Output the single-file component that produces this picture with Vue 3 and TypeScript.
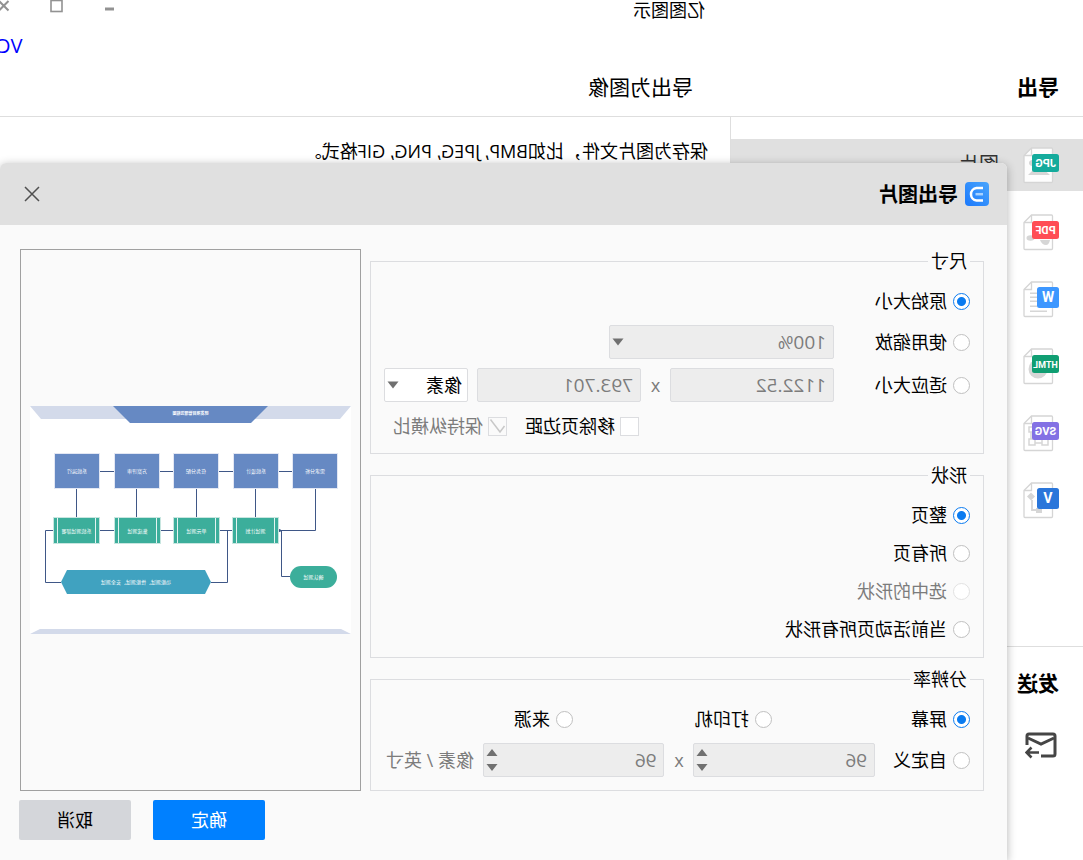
<script setup lang="ts">
import { ref } from 'vue'

interface FormatItem {
  id: string
  color: string
  wide: boolean
  size: number
}

interface FlowNode {
  x: number
  label: string
}

const formats: FormatItem[] = [
  { id: 'JPG', color: '#14ab9c', wide: true, size: 11 },
  { id: 'PDF', color: '#ff4d55', wide: true, size: 11 },
  { id: 'W', color: '#3d97ff', wide: false, size: 14 },
  { id: 'HTML', color: '#109e72', wide: true, size: 9 },
  { id: 'SVG', color: '#8371e4', wide: true, size: 11 },
  { id: 'V', color: '#2a76da', wide: false, size: 14 },
]

const shapes = [
  { value: 'page', label: '整页', disabled: false },
  { value: 'all', label: '所有页', disabled: false },
  { value: 'selected', label: '选中的形状', disabled: true },
  { value: 'active', label: '当前活动页所有形状', disabled: false },
]

const sources = [
  { value: 'screen', label: '屏幕' },
  { value: 'printer', label: '打印机' },
  { value: 'source', label: '来源' },
]

const stages: FlowNode[] = [
  { x: 14, label: '需求分析' },
  { x: 73, label: '系统设计' },
  { x: 133, label: '任务分配' },
  { x: 192, label: '方案评审' },
  { x: 252, label: '系统运行' },
]

const tests: FlowNode[] = [
  { x: 73, label: '测试计划' },
  { x: 132, label: '单元测试' },
  { x: 191, label: '集成测试' },
  { x: 252, label: '系统测试部署' },
]

const sizeMode = ref('original')
const shapeMode = ref('page')
const dpiMode = ref('screen')
const trimMargin = ref(false)
const keepRatio = ref(true)
</script>

<template>
  <div class="window">
    <header class="titlebar">
      <span class="app-name">亿图图示</span>
      <div class="controls">
        <button type="button" aria-label="最小化">
          <svg width="13" height="13" viewBox="0 0 13 13"><path d="M2 9H11" stroke="#929292" stroke-width="3" /></svg>
        </button>
        <button type="button" aria-label="最大化">
          <svg width="13" height="13" viewBox="0 0 13 13"><rect x="1" y="0.5" width="11" height="11" fill="none" stroke="#929292" stroke-width="1.6" /></svg>
        </button>
        <button type="button" aria-label="关闭窗口">
          <svg width="13" height="13" viewBox="0 0 13 13"><path d="M1.5 1L11 10.500M11 1L1.500 10.500" stroke="#929292" stroke-width="2" /></svg>
        </button>
      </div>
    </header>
    <div class="account"><a href="#">VC</a></div>
    <div class="headings">
      <h1>导出</h1>
      <h2>导出为图像</h2>
    </div>

    <div class="main">
      <nav class="sidebar">
        <ul>
          <li v-for="(item, i) in formats" :key="item.id" :class="{ active: i === 0 }">
            <svg class="format" width="36" height="37" viewBox="0 0 36 37">
              <path d="M7.500 1H27.500L35 8.500V34.500Q35 35.500 34 35.500H7.500Q6.500 35.500 6.500 34.500V2Q6.500 1 7.500 1Z" :fill="i === 0 ? '#fdfdfd' : '#fff'" stroke="#d5d5d5" stroke-width="1.300" />
              <path d="M27.500 1V8.500H35" fill="none" stroke="#d5d5d5" stroke-width="1.300" />
              <g fill="#d6d6d6">
                <path v-if="item.id === 'JPG'" d="M9 28L18 20L25 22L31 28ZM27 13a3 3 0 1 0 .1 0Z" />
                <g v-else-if="item.id === 'PDF'">
                  <ellipse cx="28.500" cy="24" rx="4" ry="2.700" />
                  <path d="M9 26H19Q17 31 13 31Q10 31 9 26Z" />
                </g>
                <g v-else-if="item.id === 'W'">
                  <path d="M22 11.500h7v1.500h-7zM22 15.500h7v1.500h-7zM22 19.500h7v1.500h-7zM22 24.500h7v1.500h-7zM12 29.500h17v1.500h-17z" />
                </g>
                <circle v-else-if="item.id === 'HTML'" cx="21" cy="21" r="9.500" />
                <path v-else-if="item.id === 'SVG'" d="M11 24h6v6h-6zM24 24h6v6h-6zM24 12h6v5h-6z" fill="none" stroke="#d6d6d6" stroke-width="1.500" />
                <g v-else>
                  <path d="M28 10.500L32 14.500L28 18.500L24 14.500Z" />
                  <path d="M27 18V28H21" fill="none" stroke="#d6d6d6" stroke-width="1.800" />
                  <path d="M17 26h6v5h-6z" />
                </g>
              </g>
              <path v-if="item.id === 'SVG'" d="M17 28H24M28 17V24" stroke="#d6d6d6" stroke-width="1.500" />
              <rect x="0" :y="item.wide ? 7 : 6" :width="item.wide ? 27 : 22" :height="item.wide ? 18 : 21" rx="2.500" :fill="item.color" />
              <text :x="item.wide ? 13.500 : 11" :y="item.id === 'HTML' ? 19.500 : item.wide ? 20 : 21" class="badge" :font-size="item.size">{{ item.id }}</text>
            </svg>
            <span v-if="i === 0">图片</span>
          </li>
        </ul>
        <section class="send">
          <h3>发送</h3>
          <svg width="32" height="27" viewBox="0 0 32 27" fill="none" stroke="#454545" stroke-width="3">
            <path d="M16 24H4Q2 24 2 22V4Q2 2 4 2H28Q30 2 30 4V13" />
            <path d="M3 6L16 12L29 6" />
            <path d="M18 20.500H30M25.500 15.500L30.500 20.500L25.500 25.500" stroke-width="2.600" />
          </svg>
        </section>
      </nav>
      <p class="hint">保存为图片文件，比如BMP, JPEG, PNG, GIF格式。</p>
    </div>

    <section class="dialog" role="dialog" aria-labelledby="dialog-title">
      <header class="dialog-head">
        <svg width="24" height="24" viewBox="0 0 24 24">
          <defs>
            <linearGradient id="logo" x1="0" y1="0" x2="1" y2="1">
              <stop offset="0" stop-color="#4aa5fc" />
              <stop offset="1" stop-color="#1b79fc" />
            </linearGradient>
          </defs>
          <rect width="24" height="24" rx="4" fill="url(#logo)" />
          <path d="M6 6H12.500A6.300 6.300 0 0 1 12.500 18.500H6" fill="none" stroke="#fff" stroke-width="2.500" />
          <path d="M6 12.200H13.500" stroke="#a9d2fe" stroke-width="2.500" />
        </svg>
        <h2 id="dialog-title">导出图片</h2>
        <button type="button" class="close" aria-label="关闭">
          <svg width="16" height="16" viewBox="0 0 16 16"><path d="M1 1L15 15M15 1L1 15" stroke="#505050" stroke-width="1.500" /></svg>
        </button>
      </header>

      <form class="dialog-body" @submit.prevent>
        <div class="options">
          <fieldset class="size">
            <legend>尺寸</legend>
            <div class="row">
              <label class="choice"><input v-model="sizeMode" type="radio" name="size" value="original" />原始大小</label>
            </div>
            <div class="row">
              <label class="choice lead"><input v-model="sizeMode" type="radio" name="size" value="scale" />使用缩放</label>
              <div class="fields">
                <div class="select half">
                  <select aria-label="缩放比例" disabled><option>100%</option></select>
                  <svg width="12" height="8" viewBox="0 0 12 8"><path d="M0.500 0.500H11.500L6 7.500Z" fill="#707070" /></svg>
                </div>
              </div>
            </div>
            <div class="row">
              <label class="choice lead"><input v-model="sizeMode" type="radio" name="size" value="fit" />适应大小</label>
              <div class="fields">
                <input class="box" type="text" aria-label="宽度" value="1122.52" disabled />
                <span class="times">x</span>
                <input class="box" type="text" aria-label="高度" value="793.701" disabled />
                <div class="select unit">
                  <select aria-label="单位"><option>像素</option></select>
                  <svg width="12" height="8" viewBox="0 0 12 8"><path d="M0.500 0.500H11.500L6 7.500Z" fill="#707070" /></svg>
                </div>
              </div>
            </div>
            <div class="row checks">
              <label class="choice">
                <span class="tick"><input v-model="trimMargin" type="checkbox" /></span>移除页边距
              </label>
              <label class="choice off">
                <span class="tick">
                  <input v-model="keepRatio" type="checkbox" disabled />
                  <svg v-if="keepRatio" width="19" height="19" viewBox="0 0 19 19"><path d="M16.500 2.500L7 15L2.500 9" fill="none" stroke="#c8c8c8" stroke-width="1.500" /></svg>
                </span>保持纵横比
              </label>
            </div>
          </fieldset>

          <fieldset class="shape">
            <legend>形状</legend>
            <div v-for="s in shapes" :key="s.value" class="row">
              <label class="choice" :class="{ off: s.disabled }">
                <input v-model="shapeMode" type="radio" name="shape" :value="s.value" :disabled="s.disabled" />{{ s.label }}
              </label>
            </div>
          </fieldset>

          <fieldset class="dpi">
            <legend>分辨率</legend>
            <div class="row sources">
              <label v-for="s in sources" :key="s.value" class="choice">
                <input v-model="dpiMode" type="radio" name="dpi" :value="s.value" />{{ s.label }}
              </label>
            </div>
            <div class="row">
              <label class="choice lead"><input v-model="dpiMode" type="radio" name="dpi" value="custom" />自定义</label>
              <div class="fields">
                <div class="spin">
                  <input class="box" type="text" aria-label="水平分辨率" value="96" disabled />
                  <svg width="12" height="24" viewBox="0 0 12 24"><path d="M0.500 8L6 1L11.500 8ZM0.500 16H11.500L6 23Z" fill="#707070" /></svg>
                </div>
                <span class="times">x</span>
                <div class="spin">
                  <input class="box" type="text" aria-label="垂直分辨率" value="96" disabled />
                  <svg width="12" height="24" viewBox="0 0 12 24"><path d="M0.500 8L6 1L11.500 8ZM0.500 16H11.500L6 23Z" fill="#707070" /></svg>
                </div>
                <span class="per">像素 / 英寸</span>
              </div>
            </div>
          </fieldset>
        </div>

        <div class="preview">
          <svg viewBox="0 0 321 228">
            <rect width="321" height="228" fill="#fff" />
            <path d="M0 0H321L310 13H11Z" fill="#d3daea" />
            <path d="M83 0H238L221 17H100Z" fill="#6689c3" />
            <text x="160.500" y="9" class="node" font-size="4" font-weight="700">研发项目管理流程图</text>
            <g fill="none" stroke="#3f5787" stroke-width="1">
              <path d="M58 65.500H252M35.500 82V124.500H73M95.500 82V112M154.500 82V112M214.500 82V112M274.500 82V112" />
              <path d="M118 124.500H305.500V176.500H290M123.500 124.500V176.500H140M69.500 124.500V170.500H61" />
            </g>
            <circle cx="71.500" cy="124.500" r="1.500" fill="#3f5787" />
            <g v-for="n in stages" :key="'s' + n.x">
              <rect :x="n.x - 0.500" y="47.500" width="45" height="35" fill="#6689c3" stroke="#e3e7f3" />
              <text :x="n.x + 22" y="67" class="node" font-size="5">{{ n.label }}</text>
            </g>
            <g v-for="n in tests" :key="'t' + n.x">
              <rect :x="n.x - 0.500" y="111.500" width="46" height="26" fill="#3cae9b" stroke="#c8e6e0" />
              <path :d="`M${n.x + 3.5} 112V137M${n.x + 41.5} 112V137`" stroke="#e4f4f1" />
              <text :x="n.x + 22.500" y="126.500" class="node" font-size="5">{{ n.label }}</text>
            </g>
            <rect x="14" y="160" width="47" height="22" rx="11" fill="#3cae9b" />
            <text x="37.500" y="173" class="node" font-size="5">确认测试</text>
            <path d="M146 164H284L290 176L284 188H146L140 176Z" fill="#40a2c0" />
            <text x="215" y="178" class="node" font-size="5">功能测试、性能测试、安全测试</text>
            <path d="M10 223H311L321 228H0Z" fill="#d3daea" />
          </svg>
        </div>

        <div class="actions">
          <button type="submit" class="primary">确定</button>
          <button type="button">取消</button>
        </div>
      </form>
    </section>
  </div>
</template>

<style>
body {
  background: #fff;
}
</style>

<style scoped>
.window {
  position: relative;
  display: flex;
  flex-direction: column;
  box-sizing: border-box;
  min-height: 100vh;
  overflow: hidden;
  background: #fff;
  color: #000;
  font: 400 18px/24px "Open Sans", "Noto Sans CJK SC", sans-serif;
  transform: scaleX(-1);
}

h1,
h2,
h3,
p,
ul {
  margin: 0;
  padding: 0;
}

button,
input,
select {
  font: inherit;
  color: inherit;
}

.titlebar {
  display: flex;
  justify-content: space-between;
  height: 24px;
  padding-left: 378px;
}

.app-name {
  line-height: 20px;
}

.controls {
  display: flex;
  gap: 40px;
  margin-right: -3px;
}

.controls button {
  width: 13px;
  height: 13px;
  padding: 0;
  border: 0;
  background: none;
}

.controls svg {
  display: block;
}

.account {
  display: flex;
  justify-content: flex-end;
  height: 40px;
  margin-right: -2px;
  line-height: 44px;
  font-size: 20px;
}

.account a {
  color: #00f;
  text-decoration: none;
}

.headings {
  display: grid;
  grid-template-columns: 366px 1fr;
  height: 52px;
  padding-left: 24px;
  border-bottom: 1px solid #dedede;
  line-height: 46px;
}

h1,
h3 {
  font-size: 21px;
  font-weight: 700;
}

.headings h2 {
  font-size: 21px;
  font-weight: 400;
}

.main {
  display: grid;
  grid-template-columns: 353px 1fr;
  flex: 1;
}

.sidebar {
  box-sizing: border-box;
  padding-top: 22px;
  border-right: 1px solid #dedede;
}

.sidebar ul {
  display: flex;
  flex-direction: column;
  gap: 15px;
  list-style: none;
}

.sidebar li {
  display: flex;
  align-items: center;
  gap: 24px;
  height: 52px;
  padding-left: 24px;
  color: #333;
  font-size: 20px;
}

.sidebar li.active {
  background: #e0e0e0;
}

.badge {
  fill: #fff;
  font-family: Roboto, sans-serif;
  font-weight: 700;
  text-anchor: middle;
}

.send {
  margin-top: 120px;
  padding: 24px 24px 0;
  border-top: 1px solid #dedede;
}

.send svg {
  display: block;
  margin: 37px 0 0 2px;
}

.hint {
  padding: 22px 0 0 22px;
}

.dialog {
  position: absolute;
  top: 163px;
  right: 0;
  bottom: 0;
  left: 76px;
  border-radius: 6px 6px 0 0;
  background: #fafafa;
  box-shadow: 0 2px 10px rgba(0, 0, 0, 0.3);
}

.dialog-head {
  display: flex;
  align-items: center;
  gap: 7px;
  height: 62px;
  padding: 0 24px 0 18px;
  border-radius: 6px 6px 0 0;
  background: #e0e0e0;
}

.dialog-head h2 {
  flex: 1;
  padding-top: 2px;
  font-size: 20px;
  font-weight: 700;
}

.close {
  width: 16px;
  height: 16px;
  padding: 0;
  border: 0;
  background: none;
}

.close svg {
  display: block;
}

.dialog-body {
  display: grid;
  grid-template-columns: 1fr 341px;
  gap: 9px;
  padding: 24px 20px 0 23px;
}

.options {
  display: flex;
  flex-direction: column;
  gap: 9px;
}

fieldset {
  min-width: 0;
  margin: 0;
  padding: 16px 13px 15px;
  border: 1px solid #dcdde0;
}

legend {
  height: 24px;
  padding: 0 3px;
}

.row {
  display: flex;
  align-items: center;
  min-height: 24px;
}

.size .row + .row,
.dpi .row + .row {
  margin-top: 12px;
}

.size .row:nth-of-type(3) {
  margin-top: 9px;
}

.shape {
  padding-bottom: 16px;
}

.shape .row + .row {
  margin-top: 14px;
}

.dpi {
  padding-bottom: 13px;
}

.choice {
  display: flex;
  align-items: center;
  gap: 6px;
  white-space: nowrap;
}

.size .lead {
  width: 136px;
}

.dpi .lead {
  width: 95px;
}

.off {
  color: #7c7c7c;
}

input[type="radio"] {
  appearance: none;
  box-sizing: border-box;
  flex: none;
  width: 17px;
  height: 17px;
  margin: 0;
  border: 1px solid #c0c0c0;
  border-radius: 50%;
  background: #fff;
}

input[type="radio"]:checked {
  border-color: #0a7bf0;
  background: radial-gradient(circle, #0a7bf0 4px, #fff 5px);
}

input[type="radio"]:disabled {
  border-color: #e2e2e2;
}

.fields {
  display: flex;
  flex: 1;
  align-items: center;
  min-width: 0;
}

.box,
select {
  box-sizing: border-box;
  width: 100%;
  height: 34px;
  min-width: 0;
  margin: 0;
  padding: 0 7px;
  border: 1px solid #dcdde0;
  border-radius: 2px;
  background: #fff;
  font-size: 19px;
}

.box:disabled,
select:disabled {
  background: #ededed;
  color: #7c7c7c;
  opacity: 1;
}

.fields > .box,
.spin {
  flex: 1;
}

.select {
  position: relative;
}

.select select {
  display: block;
  appearance: none;
}

.select svg {
  position: absolute;
  top: 13px;
  right: 3px;
  pointer-events: none;
}

.half {
  width: 50%;
}

.unit {
  width: 84px;
  margin-left: 9px;
}

.unit select {
  padding: 0 5px;
  font-size: 18px;
}

.times {
  width: 29px;
  color: #7c7c7c;
  text-align: center;
}

.spin {
  position: relative;
  min-width: 0;
}

.spin .box {
  display: block;
}

.spin svg {
  position: absolute;
  top: 5px;
  right: 3px;
}

.per {
  width: 90px;
  margin-left: 9px;
  color: #7c7c7c;
  white-space: nowrap;
}

.checks {
  gap: 18px;
  padding-left: 331px;
}

.checks .choice {
  gap: 5px;
}

.tick {
  position: relative;
  width: 19px;
  height: 19px;
}

.tick input {
  appearance: none;
  display: block;
  box-sizing: border-box;
  width: 19px;
  height: 19px;
  margin: 0;
  border: 1px solid #dcdde0;
  background: #fff;
}

.tick input:disabled {
  background: #fafafa;
}

.tick svg {
  position: absolute;
  top: 0;
  left: 0;
}

.sources {
  display: grid;
  grid-template-columns: 198px 199px 1fr;
}

.preview {
  display: flex;
  align-items: center;
  box-sizing: border-box;
  padding: 0 9px;
  border: 1px solid #a0a0a0;
}

.preview svg {
  width: 100%;
}

.node {
  fill: #fff;
  text-anchor: middle;
}

.actions {
  display: flex;
  grid-column: 2;
  justify-content: flex-end;
  gap: 22px;
  margin-right: -1px;
}

.actions button {
  width: 112px;
  height: 40px;
  border: 0;
  border-radius: 2px;
  background: #d4d6da;
}

.actions .primary {
  background: #0080ff;
  color: #fff;
}
</style>
